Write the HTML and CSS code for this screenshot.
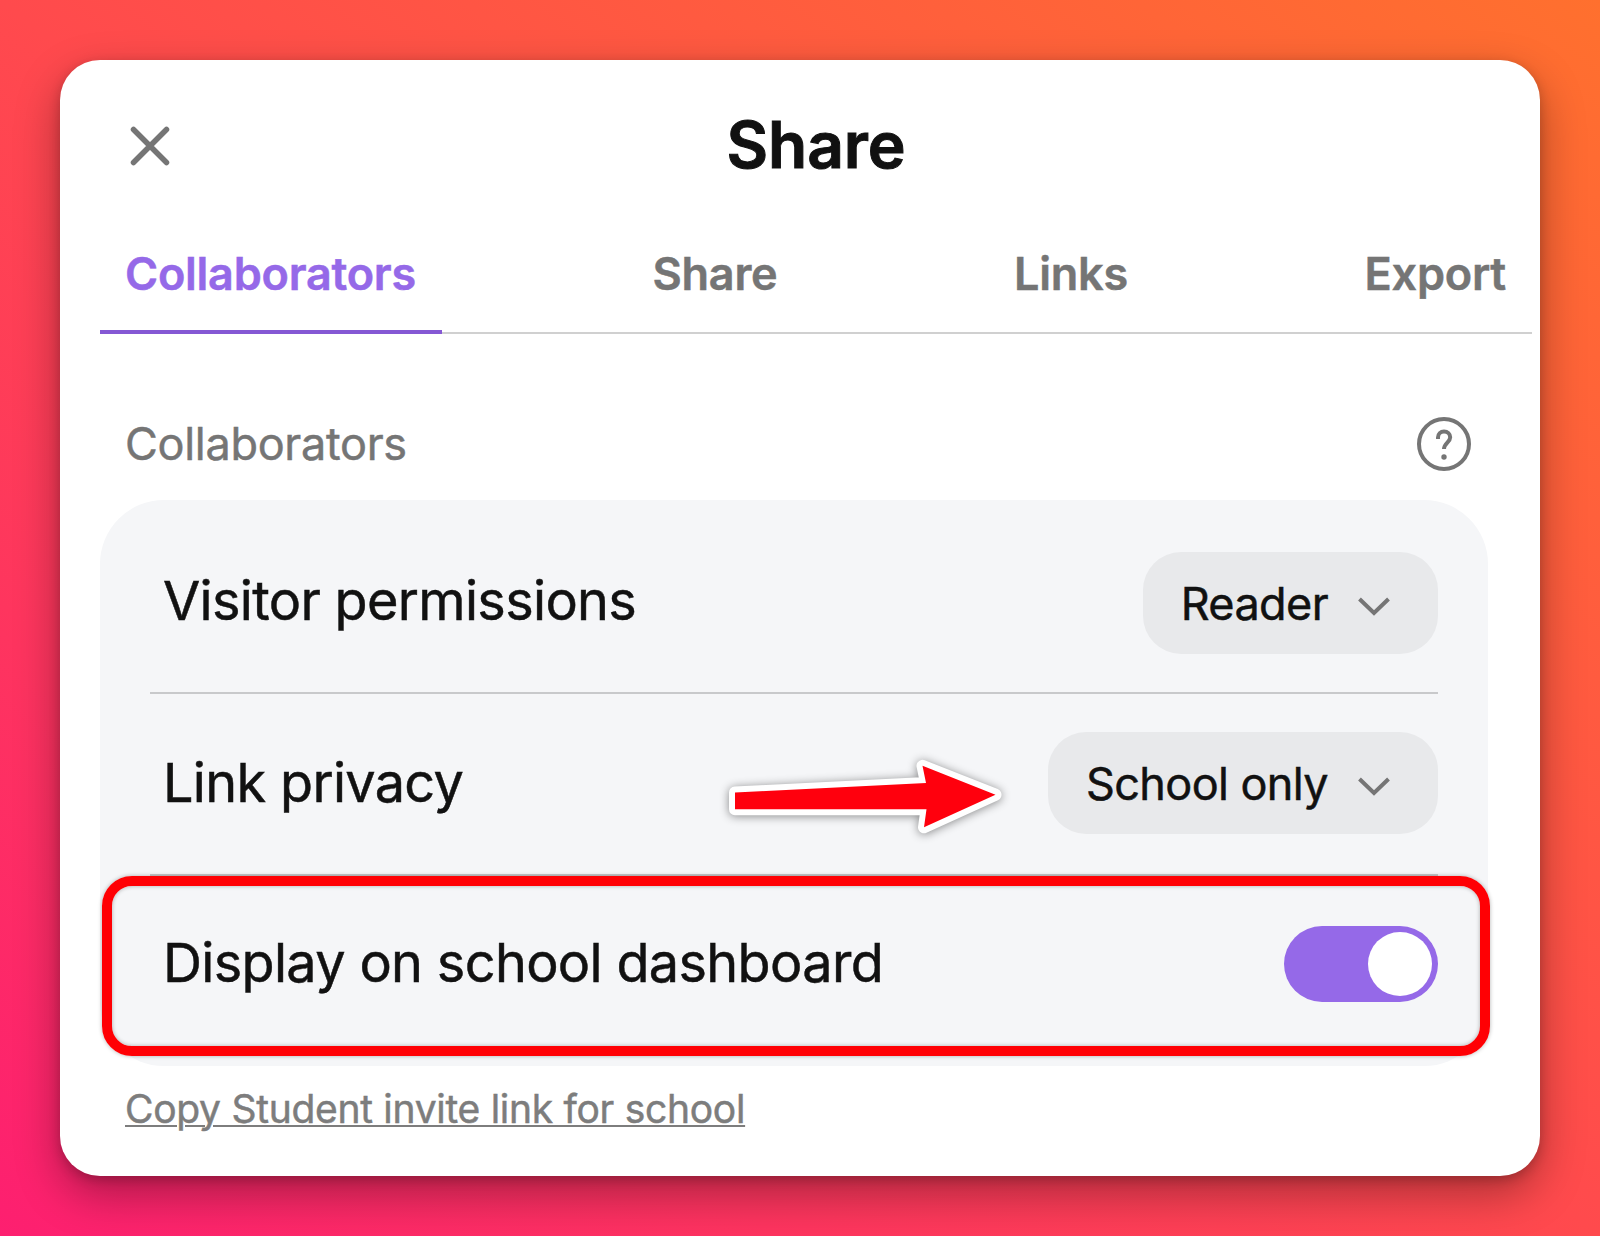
FILE: index.html
```
<!DOCTYPE html>
<html lang="en">
<head>
    <meta charset="UTF-8">
    <meta name="viewport" content="width=device-width, initial-scale=1.0">
    <title>Share</title>
    <link rel="stylesheet" href="styles.css">
</head>
<body>
    <main class="dialog">
        <header class="dialog-header">
            <button class="close-btn" aria-label="Close">
                <svg width="40" height="40" viewBox="0 0 40 40">
                    <path d="M3.5 3.5 36.5 36.5M36.5 3.5 3.5 36.5"/>
                </svg>
            </button>
            <h1>Share</h1>
        </header>

        <nav class="tabs">
            <a href="#" class="tab active">Collaborators</a>
            <a href="#" class="tab">Share</a>
            <a href="#" class="tab">Links</a>
            <a href="#" class="tab">Export</a>
        </nav>

        <div class="section-title">
            <h2>Collaborators</h2>
            <svg class="help-icon" width="54" height="54" viewBox="0 0 54 54">
                <circle cx="27" cy="27" r="25"/>
                <path d="M21 22V20.500a6 6 0 0 1 6-6c3.600 0 6.200 2.400 6.200 5.800 0 5-6.200 5.700-6.200 11.700"/>
                <circle class="dot" cx="27" cy="40" r="2.700"/>
            </svg>
        </div>

        <section class="panel">
            <div class="row">
                <span class="row-label">Visitor permissions</span>
                <button class="dropdown">
                    <span>Reader</span>
                    <svg width="32" height="20" viewBox="0 0 32 20"><path d="M1.500 2 16 16 30.500 2"/></svg>
                </button>
            </div>
            <div class="row">
                <span class="row-label">Link privacy</span>
                <button class="dropdown">
                    <span>School only</span>
                    <svg width="32" height="20" viewBox="0 0 32 20"><path d="M1.500 2 16 16 30.500 2"/></svg>
                </button>
                <!-- Arrow pointing at the privacy menu -->
                <svg class="arrow" width="300" height="100" viewBox="0 0 300 100">
                    <path d="M15 32.500 206 23 202.500 5.800 275.500 34.700 204 67.300 206.500 49.200H15Z"/>
                    <path class="fill" d="M15 32.500 206 23 202.500 5.800 275.500 34.700 204 67.300 206.500 49.200H15Z"/>
                </svg>
            </div>
            <div class="row">
                <span class="row-label">Display on school dashboard</span>
                <span class="toggle"></span>
                <!-- Red frame around the option -->
                <div class="highlight"></div>
            </div>
        </section>

        <a href="#" class="invite-link">Copy Student invite link for school</a>
    </main>
</body>
</html>
```
FILE: styles.css
```
* {
    box-sizing: border-box;
}

body {
    margin: 0;
    height: 1236px;
    padding: 60px;
    background: linear-gradient(to top right, #fd1f70 0%, #ff4a4d 50%, #ff702e 100%);
    font-family: Inter, "Liberation Sans", sans-serif;
    color: #111;
    overflow: hidden;
    -webkit-text-stroke: 0.5px;
}

.dialog {
    width: 1480px;
    height: 1116px;
    padding: 0 8px 0 40px;
    background: #fff;
    border-radius: 40px;
    box-shadow: 0 18px 46px rgba(0, 0, 0, 0.33), 0 4px 12px rgba(0, 0, 0, 0.2);
}

/* Header */
.dialog-header {
    display: grid;
    grid-template-columns: 1fr auto 1fr;
    align-items: center;
    height: 170px;
}

.dialog-header h1 {
    margin: 0;
    font-size: 64px;
    line-height: 76px;
    font-weight: 600;
    letter-spacing: -0.1px;
    -webkit-text-stroke: 1px;
}

button {
    border: none;
    padding: 0;
    background: none;
    font-family: inherit;
    color: inherit;
}

.close-btn {
    width: 40px;
    height: 40px;
    margin: 2px 0 0 30px;
}

.close-btn svg {
    display: block;
    fill: none;
    stroke: #757575;
    stroke-width: 5.5;
    stroke-linecap: round;
}

/* Tabs */
.tabs {
    display: flex;
    justify-content: space-between;
    height: 104px;
    border-bottom: 2px solid #d0d0d0;
}

.tab {
    height: 104px;
    padding: 16px 26px 0 25px;
    font-size: 45px;
    line-height: 56px;
    font-weight: 600;
    letter-spacing: -0.25px;
    color: #757575;
    text-decoration: none;
}

.tab.active {
    color: #9569e8;
    border-bottom: 4px solid #8558d4;
}

/* Section title */
.section-title {
    display: flex;
    justify-content: space-between;
    align-items: center;
    height: 54px;
    margin: 83px 61px 0 25px;
}

.section-title h2 {
    margin: 0;
    padding-bottom: 2px;
    font-size: 45px;
    font-weight: 400;
    letter-spacing: -0.3px;
    color: #757575;
}

.help-icon {
    fill: none;
    stroke: #757575;
    stroke-width: 4;
}

.help-icon .dot {
    fill: #757575;
    stroke: none;
}

/* Panel */
.panel {
    width: 1388px;
    height: 566px;
    margin-top: 29px;
    padding: 14px 50px 0;
    background: #f5f6f8;
    border-radius: 64px;
}

.row {
    position: relative;
    display: flex;
    justify-content: space-between;
    align-items: center;
    height: 182px;
    padding-bottom: 2px;
    border-bottom: 2px solid #c8c9cb;
}

.row:first-child {
    height: 180px;
    padding-bottom: 0;
}

.row:last-child {
    height: 176px;
    padding-bottom: 0;
    border-bottom: none;
}

.row-label {
    margin-left: 13px;
    padding-bottom: 4px;
    font-size: 54px;
    letter-spacing: -0.67px;
}

.row:first-child .row-label {
    padding-bottom: 6px;
}

.row:nth-child(2) .row-label {
    padding-bottom: 2px;
}

.dropdown {
    display: flex;
    align-items: center;
    gap: 30px;
    height: 102px;
    padding: 0 48px 0 38px;
    background: #e8e9eb;
    border-radius: 38px;
    font-size: 45px;
    letter-spacing: -0.6px;
}

.dropdown svg {
    margin-top: 7px;
    fill: none;
    stroke: #757575;
    stroke-width: 4;
}

.toggle {
    width: 154px;
    height: 76px;
    padding: 6px;
    background: #9569e8;
    border-radius: 38px;
}

.toggle::after {
    content: "";
    display: block;
    width: 64px;
    height: 64px;
    margin-left: auto;
    background: #fff;
    border-radius: 50%;
}

/* Annotations */
.arrow {
    position: absolute;
    left: 570px;
    top: 66px;
    overflow: visible;
    fill: #fff;
    stroke: #fff;
    stroke-width: 12;
    stroke-linejoin: round;
    filter: drop-shadow(0 1px 5px rgba(0, 0, 0, 0.45));
}

.arrow .fill {
    fill: #ff000d;
    stroke: none;
}

.highlight {
    position: absolute;
    left: -48px;
    top: 0;
    width: 1388px;
    height: 180px;
    border: 10px solid #ff0004;
    border-radius: 30px;
    box-shadow: 0 0 4px rgba(0, 0, 0, 0.3), inset 0 0 4px rgba(0, 0, 0, 0.3);
}

.invite-link {
    display: block;
    margin: 17px 0 0 25px;
    font-size: 39px;
    line-height: 52px;
    letter-spacing: -0.29px;
    color: #7d7d7d;
    text-decoration-thickness: 2px;
    text-underline-offset: 2px;
}
```
